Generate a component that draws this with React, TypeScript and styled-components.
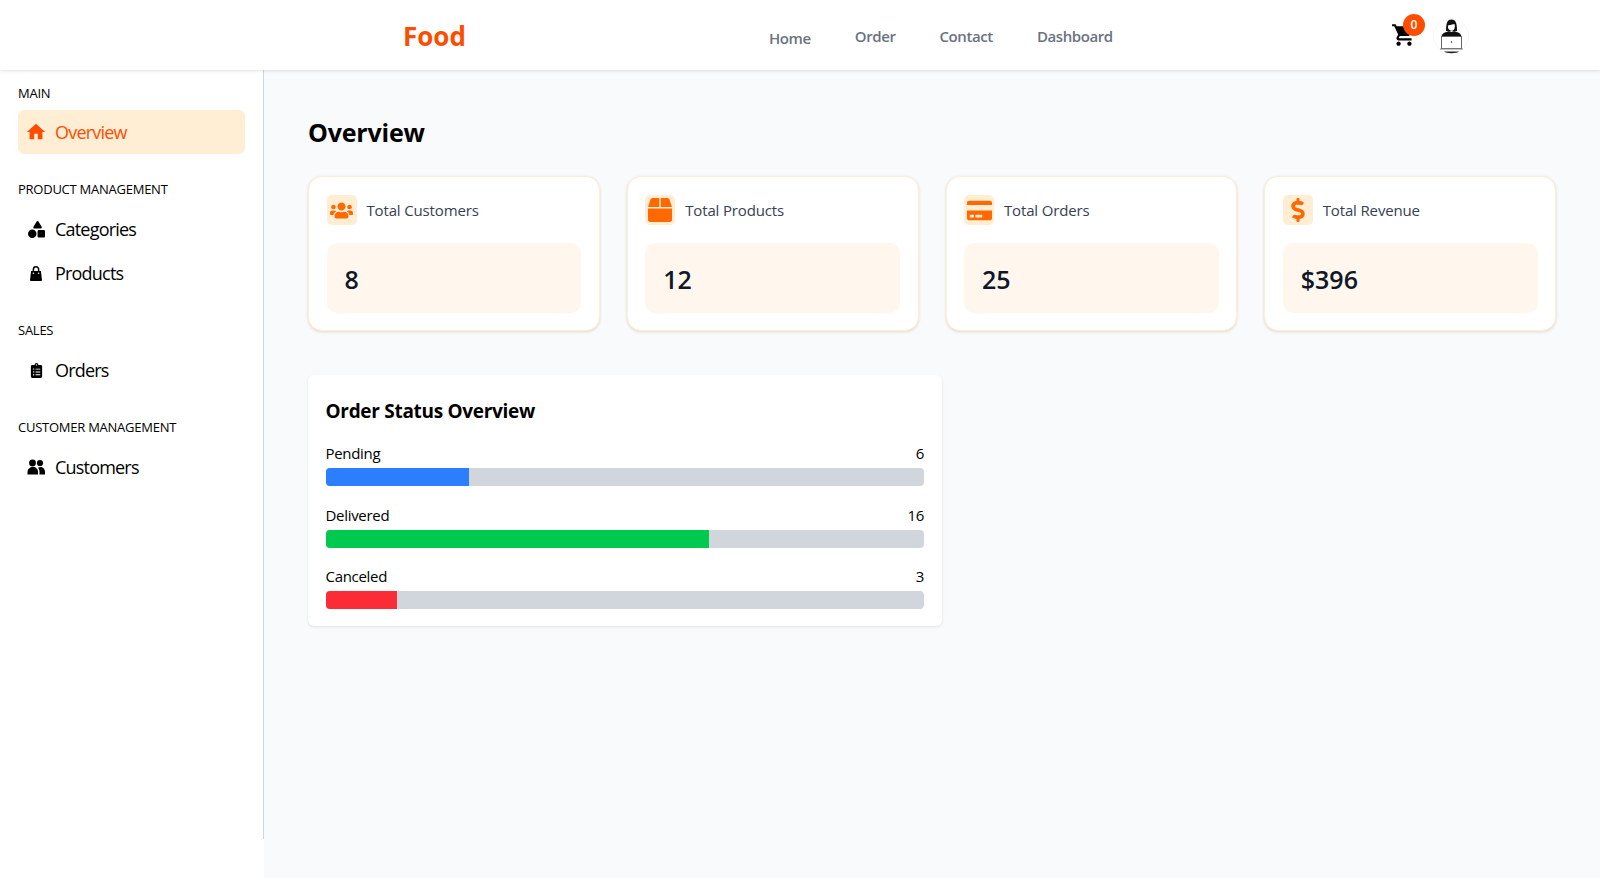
import React from "react";
import styled, { createGlobalStyle } from "styled-components";
import { FaBox, FaClipboardList, FaCreditCard, FaDollarSign, FaUsers } from "react-icons/fa";
import { FaShapes } from "react-icons/fa6";
import { MdHome, MdShoppingCart } from "react-icons/md";

const GlobalStyle = createGlobalStyle`
  * { box-sizing: border-box; }
  body {
    margin: 0;
    background: #fff;
    color: #000;
    font-family: "Open Sans", "Noto Sans", sans-serif;
  }
`;

const Header = styled.header`
  height: 70px;
  display: flex;
  align-items: center;
  padding: 0 131px 0 403px;
  background: #fff;
  box-shadow: 0 1px 3px rgba(0, 0, 0, 0.12);
  position: relative;
`;

const Logo = styled.div`
  padding-top: 2px;
  font-size: 26px;
  font-weight: 700;
  color: #ff4d00;
`;

const Nav = styled.nav`
  display: flex;
  gap: 44px;
  margin: 4px 0 0 303px;
`;

const NavLink = styled.a<{ $low?: boolean }>`
  font-size: 15px;
  font-weight: 600;
  color: #6a7282;
  letter-spacing: -0.4px;
  padding-top: ${(p) => (p.$low ? "2px" : "0")};
`;

const Actions = styled.div`
  display: flex;
  align-items: center;
  gap: 16px;
  margin-left: auto;
`;

const CartButton = styled.div`
  position: relative;
  width: 26px;
  height: 26px;
  font-size: 26px;
  line-height: 0;
`;

const Badge = styled.span`
  position: absolute;
  top: -8px;
  right: -8px;
  width: 22px;
  height: 22px;
  border-radius: 50%;
  background: #ff4d00;
  color: #fff;
  font-size: 12px;
  font-weight: 600;
  line-height: 22px;
  text-align: center;
`;

const AvatarWrap = styled.div`
  width: 36px;
  height: 36px;
  margin-top: 2px;
`;

const Body = styled.div`
  display: flex;
  align-items: flex-start;
`;

const Sidebar = styled.aside`
  width: 264px;
  height: 769px;
  flex-shrink: 0;
  padding: 14px 18px 0;
  border-right: 1px solid #cbd5e1;
`;

const GroupLabel = styled.div`
  height: 18px;
  margin-bottom: 9px;
  font-size: 13px;
  line-height: 18px;
  color: #000;
  letter-spacing: -0.25px;
`;

const Group = styled.div`
  margin-bottom: 26px;

  &:first-child ${GroupLabel} {
    margin-bottom: 8px;
  }
`;

const MenuItem = styled.a<{ $active?: boolean }>`
  height: 44px;
  display: flex;
  align-items: center;
  gap: 11px;
  padding-left: 10px;
  border-radius: 6px;
  font-size: 18px;
  letter-spacing: -0.8px;
  color: ${(p) => (p.$active ? "#ff4d00" : "#000")};
  background: ${(p) => (p.$active ? "#ffedd4" : "transparent")};
`;

const MenuIcon = styled.span`
  width: 16px;
  display: flex;
  justify-content: center;
  font-size: 17px;

  svg {
    flex-shrink: 0;
  }
`;

const Main = styled.main`
  flex: 1;
  min-height: 808px;
  padding: 46px 44px 0;
  background: #f9fafb;
`;

const PageTitle = styled.h1`
  margin: 0 0 28px;
  font-size: 25px;
  line-height: 32px;
  font-weight: 700;
  letter-spacing: -0.2px;
`;

const CardGrid = styled.div`
  display: grid;
  grid-template-columns: repeat(4, 1fr);
  gap: 27px;
  margin-bottom: 44px;
`;

const StatCard = styled.div`
  height: 155px;
  padding: 18px 17.5px;
  background: #fff;
  border: 1px solid #ffedd4;
  border-radius: 14px;
  box-shadow: 0 1px 3px rgba(120, 70, 0, 0.18);
`;

const StatHead = styled.div`
  display: flex;
  align-items: center;
  gap: 10px;
  margin-bottom: 18px;
`;

const StatIcon = styled.span`
  width: 30px;
  height: 30px;
  display: flex;
  align-items: center;
  justify-content: center;
  border-radius: 5px;
  background: #ffedd4;
  color: #ff6900;
`;

const StatLabel = styled.span`
  font-size: 15px;
  font-weight: 500;
  color: #364153;
  letter-spacing: -0.15px;
`;

const StatValueBox = styled.div`
  height: 70px;
  display: flex;
  align-items: center;
  padding: 2px 0 0 18px;
  border-radius: 10px;
  background: #fff7ed;
  font-size: 25px;
  font-weight: 600;
  color: #101828;
`;

const ChartCard = styled.section`
  width: 634px;
  height: 251px;
  padding: 20px 18px 0 17.5px;
  background: #fff;
  border-radius: 6px;
  box-shadow: 0 1px 3px rgba(0, 0, 0, 0.1);
`;

const ChartTitle = styled.h2`
  margin: 0 0 15px;
  font-size: 19px;
  line-height: 32px;
  font-weight: 700;
  letter-spacing: -0.3px;
`;

const StatusRow = styled.div`
  margin-bottom: 17.5px;
`;

const StatusText = styled.div`
  display: flex;
  justify-content: space-between;
  height: 26px;
  font-size: 15px;
  line-height: 22px;
  letter-spacing: -0.3px;
`;

const Track = styled.div`
  height: 18px;
  border-radius: 4px;
  background: #d1d5dc;
  overflow: hidden;
`;

const Fill = styled.div<{ $color: string }>`
  height: 100%;
  background: ${(p) => p.$color};
`;

function BagIcon() {
  return (
    <svg width="18" height="19" viewBox="0 0 24 24">
      <path d="M5.500 8.500 4 20.500A1.500 1.500 0 0 0 5.500 22h13a1.500 1.500 0 0 0 1.500-1.500l-1.500-12z" fill="currentColor" />
      <path d="M8.500 11V6.500a3.500 3.500 0 0 1 7 0V11" fill="none" stroke="currentColor" strokeWidth="2" />
      <circle cx="8.500" cy="11.500" r="1" fill="#fff" />
      <circle cx="15.500" cy="11.500" r="1" fill="#fff" />
    </svg>
  );
}

function PeopleIcon() {
  return (
    <svg width="18" height="16" viewBox="0 0 18 16" fill="currentColor">
      <circle cx="5.500" cy="4" r="3.400" />
      <circle cx="13" cy="4" r="3.100" />
      <path d="M.5 15.500V13c0-3 2.500-5 5.500-5s5 2 5 5v2.500z" />
      <path d="M12.500 15.500V13c0-1.800-.6-3.300-1.500-4.300.7-.4 1.500-.6 2.300-.6 2.500 0 4.700 2 4.700 4.900v2.500z" />
    </svg>
  );
}

function Avatar() {
  return (
    <svg width="36" height="36" viewBox="0 0 36 36">
      <circle cx="18" cy="18" r="17.500" fill="#fff" stroke="#f6f6f6" />
      <path d="M13 13C13 4.500 14.500 1.500 18.500 1.500S24 4.500 24 13z" fill="#111" />
      <path d="M15 7.500c2-.5 4.500-1 6.500-1.500.5 1.500.5 3 0 4.500-.6 1.500-1.800 2.300-3 2.300s-2.700-1-3.300-2.500c-.3-1-.4-1.800-.2-2.800z" fill="#fff" />
      <path d="M8.500 19c.2-2.500 1.500-3.800 4-4.700l3.500-1.300 2.500 1 2.500-1 3.500 1.300c2.500.9 3.800 2.200 4 4.700z" fill="#111" />
      <rect x="8.500" y="18.500" width="20" height="12" fill="#fff" stroke="#666" />
      <circle cx="18.500" cy="24" r=".7" fill="#111" />
      <path d="M7 31h23" stroke="#888" strokeWidth="1" />
      <path d="M11 33.500h15c-2 2.200-13 2.200-15 0z" fill="#222" />
    </svg>
  );
}

const menuGroups = [
  { label: "MAIN", items: [{ name: "Overview", icon: <MdHome size={22} />, active: true }] },
  {
    label: "PRODUCT MANAGEMENT",
    items: [
      { name: "Categories", icon: <FaShapes /> },
      { name: "Products", icon: <BagIcon /> },
    ],
  },
  { label: "SALES", items: [{ name: "Orders", icon: <FaClipboardList size={15} /> }] },
  { label: "CUSTOMER MANAGEMENT", items: [{ name: "Customers", icon: <PeopleIcon /> }] },
];

const stats = [
  { label: "Total Customers", value: "8", icon: <FaUsers size={23} /> },
  { label: "Total Products", value: "12", icon: <FaBox size={24} /> },
  { label: "Total Orders", value: "25", icon: <FaCreditCard size={25} /> },
  { label: "Total Revenue", value: "$396", icon: <FaDollarSign size={24} /> },
];

const statuses = [
  { label: "Pending", count: 6, color: "#2b7fff" },
  { label: "Delivered", count: 16, color: "#00c950" },
  { label: "Canceled", count: 3, color: "#fb2c36" },
];

const totalOrders = 25;

export default function App() {
  return (
    <>
      <GlobalStyle />
      <Header>
        <Logo>Food</Logo>
        <Nav>
          <NavLink $low>Home</NavLink>
          <NavLink>Order</NavLink>
          <NavLink>Contact</NavLink>
          <NavLink>Dashboard</NavLink>
        </Nav>
        <Actions>
          <CartButton>
            <MdShoppingCart />
            <Badge>0</Badge>
          </CartButton>
          <AvatarWrap>
            <Avatar />
          </AvatarWrap>
        </Actions>
      </Header>
      <Body>
        <Sidebar>
          {menuGroups.map((group) => (
            <Group key={group.label}>
              <GroupLabel>{group.label}</GroupLabel>
              {group.items.map((item: any) => (
                <MenuItem key={item.name} $active={item.active}>
                  <MenuIcon>{item.icon}</MenuIcon>
                  {item.name}
                </MenuItem>
              ))}
            </Group>
          ))}
        </Sidebar>
        <Main>
          <PageTitle>Overview</PageTitle>
          <CardGrid>
            {stats.map((stat) => (
              <StatCard key={stat.label}>
                <StatHead>
                  <StatIcon>{stat.icon}</StatIcon>
                  <StatLabel>{stat.label}</StatLabel>
                </StatHead>
                <StatValueBox>{stat.value}</StatValueBox>
              </StatCard>
            ))}
          </CardGrid>
          <ChartCard>
            <ChartTitle>Order Status Overview</ChartTitle>
            {statuses.map((status) => (
              <StatusRow key={status.label}>
                <StatusText>
                  <span>{status.label}</span>
                  <span>{status.count}</span>
                </StatusText>
                <Track>
                  <Fill $color={status.color} style={{ width: `${(status.count / totalOrders) * 100}%` }} />
                </Track>
              </StatusRow>
            ))}
          </ChartCard>
        </Main>
      </Body>
    </>
  );
}
